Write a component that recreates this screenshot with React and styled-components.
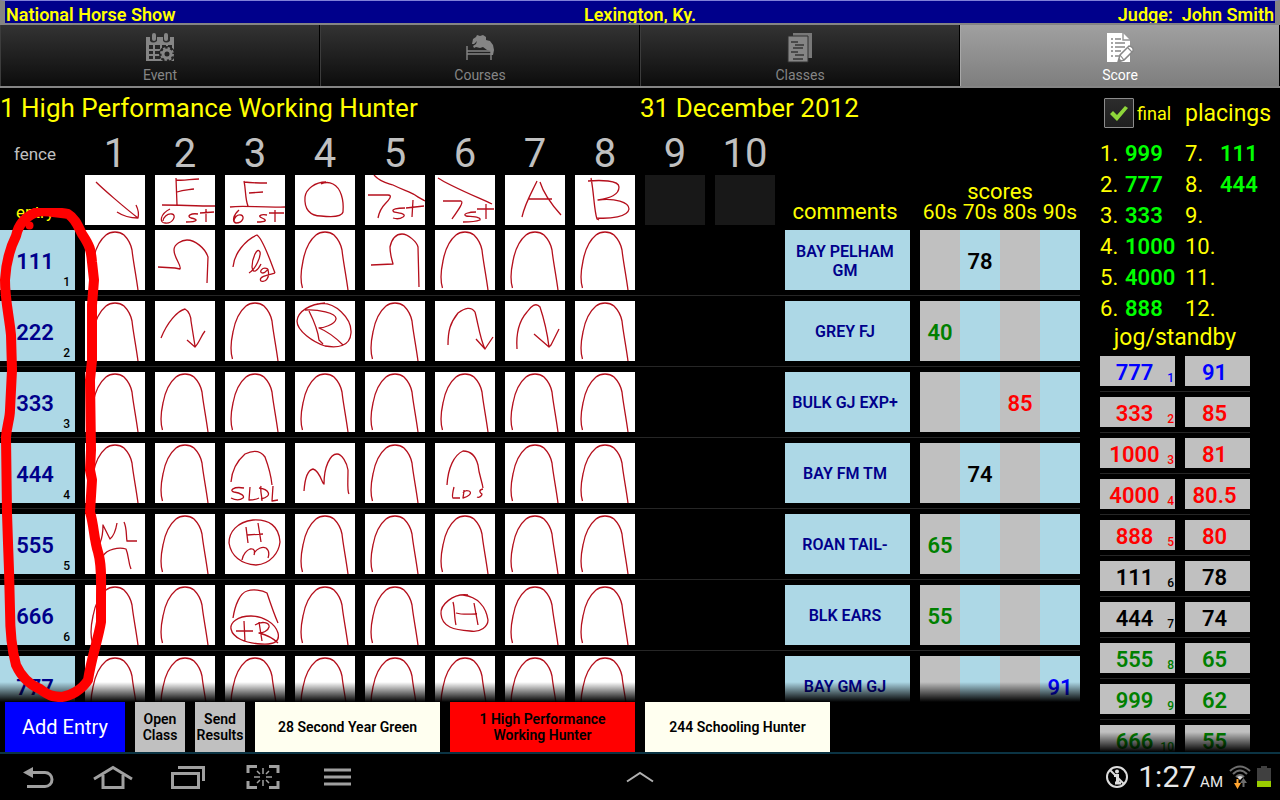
import React from "react";
import styled, { createGlobalStyle } from "styled-components";

const GlobalStyle = createGlobalStyle`
  * { box-sizing: border-box; }
  body {
    margin: 0;
    background: #000;
    font-family: Roboto, "Liberation Sans", sans-serif;
  }
  button {
    font-family: inherit;
    border: 0;
    padding: 0;
    cursor: pointer;
  }
  svg { display: block; }
`;

const SKY = "#add8e6";
const SILVER = "#c0c0c0";
const NAVY = "#00008b";
const YELLOW = "#ffff00";

const Page = styled.div`
  display: flex;
  flex-direction: column;
  height: 100vh;
  overflow: hidden;
`;

const ShowBar = styled.header`
  display: grid;
  grid-template-columns: 1fr auto 1fr;
  height: 25px;
  flex: none;
  padding: 0 1px;
  line-height: 28px;
  font-size: 18px;
  font-weight: 600;
  color: ${YELLOW};
  background: ${NAVY};
  border: solid #848484;
  border-width: 1px 5px 2px 5px;
  border-top-color: #8080d8;
  overflow: hidden;
  white-space: pre;
`;

const JudgeName = styled.span`
  text-align: right;
`;

const TabBar = styled.nav`
  display: flex;
  flex: none;
  height: 63px;
  border-bottom: 2px solid #858585;
`;

const Tab = styled.button`
  flex: 1;
  display: flex;
  flex-direction: column;
  align-items: center;
  gap: 3px;
  padding-top: 8px;
  font-size: 14px;
  line-height: 18px;
  color: ${(p) => (p.$active ? "#fff" : "#858585")};
  background: ${(p) =>
    p.$active
      ? "linear-gradient(#a0a0a0, #7e7e7e)"
      : "linear-gradient(#333, #1c1c1c 60%, #0c0c0c)"};
  border-left: 1px solid ${(p) => (p.$active ? "#a8a8a8" : "#3c3c3c")};
  border-right: 1px solid #000;
`;

const Body = styled.div`
  display: flex;
  flex: 1;
  min-height: 0;
`;

const Main = styled.main`
  position: relative;
  display: flex;
  flex-direction: column;
  flex: 1;
  min-width: 0;
`;

const ClassHeading = styled.div`
  display: grid;
  grid-template-columns: 640px 1fr;
  flex: none;
  font-size: 26px;
  line-height: 40px;
  color: ${YELLOW};
`;

const ClassTitle = styled.h1`
  margin: 0;
  font: inherit;
`;

const FadingList = styled.div`
  position: relative;
  flex: 1;
  min-height: 0;
  overflow: hidden;
  padding-top: ${(p) => p.$top || 0}px;
  padding-right: ${(p) => p.$inset}px;
  &::after {
    content: "";
    position: absolute;
    left: 0;
    right: 0;
    bottom: 0;
    height: 20px;
    background: linear-gradient(rgba(0, 0, 0, 0), #000);
  }
`;

const ScoreTable = styled.table`
  width: 100%;
  table-layout: fixed;
  border-spacing: 0;
`;

const Col = styled.col`
  width: ${(p) => p.$w}px;
`;

const NumberHead = styled.th`
  height: 42px;
  padding: 0 10px 0 0;
  font-size: 40px;
  line-height: 42px;
  font-weight: 400;
  color: ${SILVER};
`;

const FenceHead = styled(NumberHead)`
  padding-right: 15px;
  font-size: 17px;
`;

const SketchHead = styled.th`
  padding: 0 10px 0 0;
`;

const LabelHead = styled.th`
  height: 50px;
  padding: 0 ${(p) => p.$right}px 3px 0;
  vertical-align: bottom;
  font-size: ${(p) => (p.$small ? 17 : 22)}px;
  line-height: 20px;
  font-weight: 400;
  color: ${YELLOW};
`;

const BandLabels = styled.div`
  display: grid;
  grid-template-columns: repeat(4, 40px);
  font-size: 21px;
`;

const Cell = styled.td`
  padding: 5px ${(p) => (p.$flush ? 0 : 10)}px 5px 0;
  border-bottom: 1px solid #262626;
`;

const SketchBox = styled.div`
  height: ${(p) => p.$h}px;
  background: ${(p) => (p.$empty ? "#181818" : "#fff")};
`;

const Sketch = styled.svg`
  fill: none;
  stroke: #b50f1c;
  stroke-width: 1.3;
  stroke-linejoin: round;
`;

const EntryBox = styled.div`
  position: relative;
  height: 60px;
  padding: 2px 5px 0 0;
  text-align: center;
  font-size: 22px;
  line-height: 60px;
  font-weight: 600;
  color: ${NAVY};
  background: ${SKY};
`;

const Order = styled.span`
  position: absolute;
  right: ${(p) => p.$right}px;
  bottom: 1px;
  font-size: 12px;
  line-height: 14px;
  font-weight: 500;
  color: ${(p) => p.$color};
`;

const CommentBox = styled.div`
  display: flex;
  align-items: center;
  justify-content: center;
  height: 60px;
  padding: 1px 10px 0 5px;
  text-align: center;
  font-size: 16px;
  line-height: 19px;
  font-weight: 600;
  color: ${NAVY};
  background: ${SKY};
`;

const Band = styled.div`
  height: 60px;
  padding-top: 2px;
  text-align: center;
  font-size: 22px;
  line-height: 60px;
  font-weight: 600;
  color: ${(p) => p.$color};
  background: ${(p) => p.$bg};
`;

const ClassBar = styled.div`
  display: flex;
  flex: none;
  gap: 10px;
  height: 50px;
  padding-left: 5px;
`;

const AddEntry = styled.button`
  width: 120px;
  font-size: 20px;
  color: #fff;
  background: #0000ff;
`;

const ActionButton = styled.button`
  width: 50px;
  font-size: 14px;
  line-height: 16px;
  font-weight: 600;
  color: #000;
  background: ${SILVER};
`;

const ClassButton = styled(ActionButton)`
  width: 185px;
  padding: 0 20px 1px;
  background: ${(p) => (p.$active ? "#ff0000" : "#fffff0")};
`;

const Annotation = styled.svg`
  position: absolute;
  left: 0;
  top: 120px;
  pointer-events: none;
  fill: none;
  stroke: #ff0000;
  stroke-width: 10;
  stroke-linejoin: round;
  stroke-linecap: round;
`;

const Sidebar = styled.aside`
  display: flex;
  flex-direction: column;
  flex: none;
  width: 180px;
`;

const PlacingsHead = styled.div`
  display: flex;
  align-items: center;
  flex: none;
  height: 50px;
  padding: 0 0 0 4px;
  color: ${YELLOW};
`;

const FinalLabel = styled.label`
  position: relative;
  display: flex;
  align-items: center;
  gap: 3px;
  width: 81px;
  font-size: 18px;
`;

const FinalCheck = styled.input`
  appearance: none;
  width: 30px;
  height: 30px;
  margin: 0;
  background: linear-gradient(#2c2c2c, #1e1e1e);
  border: 1px solid #8c8c8c;
  border-radius: 1px;
`;

const CheckMark = styled.svg`
  position: absolute;
  left: 5px;
  top: 5px;
  pointer-events: none;
`;

const SideTitle = styled.h2`
  flex: none;
  margin: 0;
  font-size: 23px;
  line-height: 27px;
  font-weight: 400;
  color: ${YELLOW};
`;

const JogTitle = styled(SideTitle)`
  width: 150px;
  text-align: center;
`;

const PlacingsTable = styled.table`
  flex: none;
  width: 100%;
  table-layout: fixed;
  border-spacing: 0;
  font-size: 22px;
  line-height: 31px;
`;

const PlaceCell = styled.td`
  padding: 0;
  color: ${YELLOW};
`;

const WinnerCell = styled.td`
  padding: 0;
  font-weight: 600;
  color: #00ff00;
`;

const JogTable = styled.table`
  width: 150px;
  table-layout: fixed;
  border-spacing: 0;
`;

const JogBox = styled.div`
  position: relative;
  height: 30px;
  padding: 2px 6px 0 0;
  text-align: center;
  font-size: 22px;
  line-height: 30px;
  font-weight: 600;
  color: ${(p) => p.$color};
  background: ${SILVER};
`;

const SystemBar = styled.footer`
  display: grid;
  grid-template-columns: 1fr auto 1fr;
  align-items: center;
  flex: none;
  height: 48px;
  border-top: 2px solid #0b3444;
`;

const NavKeys = styled.div`
  display: flex;
`;

const NavKey = styled.button`
  display: flex;
  justify-content: center;
  width: 75px;
  background: none;
`;

const Status = styled.div`
  display: flex;
  align-items: center;
  justify-content: flex-end;
  gap: 6px;
  padding-right: 9px;
  color: #e8e8e8;
`;

const Clock = styled.div`
  display: flex;
  align-items: baseline;
  gap: 4px;
  padding-left: 3px;
  font-size: 30px;
  line-height: 40px;
`;

const Meridiem = styled.span`
  font-size: 15px;
  line-height: 18px;
`;

const ARCH =
  "M7.5 58C5 50 6 40 8 31C10 20 15 10 21 5C26 1 34 1 39 5C43 9 46 15 47 20C48 30 51 45 53 60";

const COURSE = [
  "M11 7C18 14 40 33 53 43M32 37C38 41 46 43 53 43C54 39 53 34 51 30",
  "M21 3L22 30M21 5C30 6 35 4 44 4M22 17C28 15 32 15 39 14M7 30C25 30 40 31 60 31M15 34C5 39 4 48 10 48C18 49 22 40 17 39C12 38 8 43 8 46M43 39C36 38 31 41 36 43C43 44 44 47 31 47M51 34L51 47M45 38L59 37",
  "M19 6C21 15 20 24 23 31M19 7C28 8 34 8 42 8M24 18L38 17M5 32C20 30 35 33 60 32M14 35C8 40 7 47 11 48C18 48 20 41 16 40C12 39 9 43 9 46M42 40C36 39 32 41 37 43C42 45 42 47 32 47M50 35L50 47M44 38L59 38",
  "M31 7C20 7 11 14 10 22C9 34 15 41 26 41C35 42 47 42 48 37C49 25 46 13 38 9C34 7 30 7 26 9",
  "M9 0C15 7 22 8 28 10C38 15 45 17 50 20C54 23 57 24 60 26M3 20L23 20C28 20 24 25 20 29C15 34 14 38 13 43M40 33C33 33 25 34 29 37C35 38 42 39 38 42C35 44 31 44 28 43M48 25L47 42M41 33L59 31",
  "M3 3C15 11 42 22 57 29M8 26L26 26C29 27 24 34 17 44M41 37C34 37 27 39 31 41C40 42 46 42 45 45C40 47 34 47 28 47M51 29L51 44M42 34L59 34",
  "M17 42C20 28 27 17 32 6M35 7C39 20 47 30 56 40M24 24L47 24",
  "M16 3C19 18 19 35 22 44L24 45M13 6C25 5 44 5 44 12C44 20 35 23 23 25C40 23 54 27 54 34C53 42 35 44 21 43",
];

const SKETCHES = {
  "111-2": "M3 37L20 38L25 39C27 36 19 28 19 20C19 14 27 10 32 10C40 10 50 18 53 27L52 53",
  "111-3":
    "M8 37C9 24 20 10 32 5C38 9 45 30 50 43M24 43C31 39 36 26 35 22C32 16 27 29 27 37C28 45 33 40 36 34M43 39C37 36 33 43 38 43C41 43 43 38 43 40C45 47 41 53 36 51C33 47 42 45 50 43",
  "111-5": "M6 35L28 34C26 26 25 24 25 17C27 8 32 4 37 4C43 4 52 12 53 17L54 57",
  "222-2": "M6 37C12 22 22 10 30 8C34 10 36 16 36 20L40 45M32 39L40 46C44 42 46 35 50 30",
  "222-4":
    "M22 3C40 -1 57 18 56 32C55 46 42 47 30 45C18 41 2 30 2 20C3 10 15 3 30 2M10 9C22 8 42 12 41 18C40 24 27 27 24 27C29 29 37 33 48 44M14 10C19 20 23 30 24 39L28 43",
  "222-6": "M13 44C13 30 15 22 23 12C30 7 36 5 40 11C43 22 45 38 50 48M41 38L50 48L58 36",
  "222-7": "M12 48C11 34 14 20 22 11C26 5 31 1 35 6C39 18 42 30 44 46M29 33L44 46L46 44C49 38 51 34 54 28",
  "444-3":
    "M6 39C7 26 12 18 20 11C28 7 35 7 40 14C43 22 46 32 47 42M19 45C8 43 4 48 9 49C16 50 20 53 18 55C14 58 10 57 6 55M25 44L24 57C28 57 32 56 34 55M36 43C35 48 37 53 37 58M34 45C43 46 49 53 36 56M48 43L47 58L53 57",
  "444-4": "M9 48C10 34 13 27 18 26C23 27 26 35 28 40L29 41C29 24 35 11 42 11C47 11 52 20 53 27C53 40 52 48 54 51",
  "444-6":
    "M12 42C13 25 19 12 28 8C37 8 41 14 43 22C44 32 47 38 48 45M19 44C18 48 17 54 18 55L25 55M29 47C29 50 28 54 28 55C33 54 38 50 34 48C31 47 29 48 28 50M48 46C43 47 45 50 47 51C47 53 44 55 42 54",
  "555-1": "M15 29C18 22 18 16 18 11L25 25C29 22 31 15 32 9M39 8C42 14 41 22 42 27L52 27M18 42C22 35 34 33 41 35C44 42 43 48 46 55",
  "555-3":
    "M28 6C12 8 4 18 4 29C6 42 16 50 31 51C46 50 54 38 55 28C54 12 44 5 28 6M21 13L23 29M33 9L36 28M22 21L38 20M17 46C18 40 22 36 25 35C30 34 30 38 29 41M29 39C32 35 37 32 41 34C45 37 44 41 43 44",
  "666-3":
    "M8 33C10 20 15 8 22 6C28 4 37 5 42 8C45 17 49 29 53 38M26 31C12 31 5 38 6 44C8 53 20 58 36 59C50 60 55 56 53 48C50 38 38 31 26 31M11 46L28 46M19 36L20 57M34 37L37 56M30 40C36 36 45 37 44 42C43 46 38 48 34 48C42 50 48 53 53 58",
  "666-6":
    "M33 10C18 8 5 20 6 29C7 42 19 45 35 46C46 48 53 41 53 35C51 22 43 12 28 10M18 17C20 24 19 32 21 40M39 18L43 40M21 28C28 30 34 29 42 29",
};

const ENTRIES = [
  { id: "111", comment: "BAY PELHAM GM", band: 1, score: "78" },
  { id: "222", comment: "GREY FJ", band: 0, score: "40" },
  { id: "333", comment: "BULK GJ EXP+", band: 2, score: "85" },
  { id: "444", comment: "BAY FM TM", band: 1, score: "74" },
  { id: "555", comment: "ROAN TAIL-", band: 0, score: "65" },
  { id: "666", comment: "BLK EARS", band: 0, score: "55" },
  { id: "777", comment: "BAY GM GJ", band: 3, score: "91" },
];

const BAND_COLORS = ["#008000", "#000", "#ff0000", "#0000ff"];
const FENCES = [1, 2, 3, 4, 5, 6, 7, 8, 9, 10];

const PLACINGS = [
  ["999", "111"],
  ["777", "444"],
  ["333", ""],
  ["1000", ""],
  ["4000", ""],
  ["888", ""],
];

const JOG = [
  ["777", "91", 3],
  ["333", "85", 2],
  ["1000", "81", 2],
  ["4000", "80.5", 2],
  ["888", "80", 2],
  ["111", "78", 1],
  ["444", "74", 1],
  ["555", "65", 0],
  ["999", "62", 0],
  ["666", "55", 0],
];

const EventIcon = () => (
  <svg width="28" height="30" viewBox="0 0 28 30">
    <path d="M0 4H28V28H0Z" fill="#858585" />
    <path
      d="M3 12H7V16H3ZM9 12H14V16H9ZM16 12H20V16H16ZM22 12H26V16H22ZM3 18H7V21H3ZM9 18H14V21H9ZM3 23H7V26H3ZM9 23H14V26H9Z"
      fill="#262626"
    />
    <path d="M4 3H11V8Q7 11 4 8ZM17 3H24V8Q20 11 17 8Z" fill="#2c2c2c" />
    <rect x="6" y="0" width="4" height="8" rx="2" fill="#858585" />
    <rect x="18" y="0" width="4" height="8" rx="2" fill="#858585" />
    <circle cx="21" cy="21" r="8" fill="#222" />
    <circle cx="21" cy="21" r="4" fill="none" stroke="#858585" strokeWidth="3" />
    <circle cx="21" cy="21" r="6" fill="none" stroke="#858585" strokeWidth="2" strokeDasharray="2.4 2.3" />
  </svg>
);

const CoursesIcon = () => (
  <svg width="28" height="30" viewBox="0 0 28 30" fill="#858585">
    <path d="M6 11L7 6L10 4L11 2L14 3L17 2L20 4L20 7L24 8L27 12L28 17L27 22L25 22L25 18L21 17L17 14L14 15L10 14L8 15L7 13L10 11L11 8L8 11Z" />
    <path d="M1 13v14M25 17v10M1 18h24M1 21h24" fill="none" stroke="#858585" strokeWidth="1.4" />
  </svg>
);

const ClassesIcon = () => (
  <svg width="28" height="30" viewBox="0 0 28 30">
    <path d="M7 0H26V25H7Z" fill="#787878" />
    <path d="M2 3H22V29H2Z" fill="#858585" stroke="#303030" strokeWidth="1" />
    <path d="M5 9h7M9 12h9M7 15h10M5 19h7M9 22h9M7 26h10" stroke="#363636" strokeWidth="1.4" />
  </svg>
);

const ScoreIcon = () => (
  <svg width="28" height="30" viewBox="0 0 28 30">
    <path d="M1 0h16l7 7v22H1z" fill="#fff" />
    <path d="M17 0v7h7" fill="none" stroke="#949494" strokeWidth="1.4" />
    <path d="M5 6h2M9 6h6M5 10h2M9 10h10M5 14h2M9 14h10M5 18h2M9 18h6M5 23h2M9 23h4" stroke="#888" strokeWidth="1.5" />
    <path d="M12 29L14 22L23 13Q28 14 27 18L18 27Z" fill="#fff" stroke="#888" strokeWidth="1.5" />
    <path d="M14 22L18 27M22 15L26 19" stroke="#888" strokeWidth="1.2" />
    <path d="M12 29L13 25L16 28Z" fill="#888" />
  </svg>
);

const TABS = [
  ["Event", EventIcon],
  ["Courses", CoursesIcon],
  ["Classes", ClassesIcon],
  ["Score", ScoreIcon],
];

const KEYS = {
  Back: (
    <svg width="34" height="26" viewBox="0 0 34 26" fill="none" stroke="#a0a0a0" strokeWidth="3">
      <path d="M9 8.500H24a7 7 0 0 1 0 14H6" />
      <path d="M2 8.500L12 3V14Z" fill="#a0a0a0" stroke="none" />
    </svg>
  ),
  Home: (
    <svg width="40" height="26" viewBox="0 0 40 26" fill="none" stroke="#a0a0a0" strokeWidth="3">
      <path d="M1 15L20 3.500L39 15M10 11V23.500H30V11" />
    </svg>
  ),
  "Recent apps": (
    <svg width="36" height="26" viewBox="0 0 36 26" fill="none" stroke="#a0a0a0" strokeWidth="3">
      <path d="M2.500 9.500H28.500V23.500H2.500ZM8 3.500H33.500V17" />
    </svg>
  ),
  Screenshot: (
    <svg width="34" height="26" viewBox="0 0 34 26" fill="none" stroke="#a0a0a0" strokeWidth="3">
      <path d="M2 9V2.500H11M23 2.500H32V9M2 17V23.500H11M23 23.500H32V17" />
      <path d="M17 4V10M17 16V22M8 13H14M20 13H26M11 7L14 10M23 7L20 10M11 19L14 16M23 19L20 16" strokeWidth="1.500" />
    </svg>
  ),
  Menu: (
    <svg width="27" height="26" viewBox="0 0 27 26" stroke="#a0a0a0" strokeWidth="3">
      <path d="M0 6H27M0 13H27M0 20H27" />
    </svg>
  ),
};

function FenceSketch({ path, height }) {
  return (
    <SketchBox $h={height}>
      <Sketch width="60" height={height} viewBox={`0 0 60 ${height}`}>
        <path d={path} />
      </Sketch>
    </SketchBox>
  );
}

function EntryRow({ entry, order }) {
  return (
    <tr>
      <Cell>
        <EntryBox>
          {entry.id}
          <Order $right={5} $color="#000">{order}</Order>
        </EntryBox>
      </Cell>
      {FENCES.map((n) => (
        <Cell key={n}>
          {n <= 8 && <FenceSketch path={SKETCHES[`${entry.id}-${n}`] || ARCH} height={60} />}
        </Cell>
      ))}
      <Cell>
        <CommentBox>{entry.comment}</CommentBox>
      </Cell>
      {BAND_COLORS.map((color, i) => (
        <Cell key={color} $flush>
          <Band $color={color} $bg={i % 2 ? SKY : SILVER}>
            {entry.band === i ? entry.score : ""}
          </Band>
        </Cell>
      ))}
    </tr>
  );
}

function ScoreSheet() {
  return (
    <ScoreTable>
      <colgroup>
        <Col $w={85} />
        {FENCES.map((n) => (
          <Col key={n} $w={70} />
        ))}
        <col />
        {BAND_COLORS.map((c) => (
          <Col key={c} $w={40} />
        ))}
      </colgroup>
      <thead>
        <tr>
          <FenceHead>fence</FenceHead>
          {FENCES.map((n) => (
            <NumberHead key={n}>{n}</NumberHead>
          ))}
          <td colSpan={5} />
        </tr>
        <tr>
          <LabelHead $small $right={15}>entry</LabelHead>
          {FENCES.map((n) => (
            <SketchHead key={n}>
              {n <= 8 ? <FenceSketch path={COURSE[n - 1]} height={50} /> : <SketchBox $h={50} $empty />}
            </SketchHead>
          ))}
          <LabelHead $right={15}>comments</LabelHead>
          <LabelHead colSpan={4} $right={0}>
            scores
            <BandLabels>
              <span>60s</span>
              <span>70s</span>
              <span>80s</span>
              <span>90s</span>
            </BandLabels>
          </LabelHead>
        </tr>
      </thead>
      <tbody>
        {ENTRIES.map((entry, i) => (
          <EntryRow key={entry.id} entry={entry} order={i + 1} />
        ))}
      </tbody>
    </ScoreTable>
  );
}

function PlacingsPanel() {
  return (
    <Sidebar>
      <PlacingsHead>
        <FinalLabel>
          <FinalCheck type="checkbox" defaultChecked />
          <CheckMark width="20" height="20" viewBox="0 0 20 20">
            <path d="M1 11L4 8L8 12L16 3L19 5L8 18Z" fill="#8ed63a" />
          </CheckMark>
          final
        </FinalLabel>
        <SideTitle>placings</SideTitle>
      </PlacingsHead>
      <PlacingsTable>
        <colgroup>
          <Col $w={25} />
          <Col $w={60} />
          <Col $w={35} />
          <col />
        </colgroup>
        <tbody>
          {PLACINGS.map(([left, right], i) => (
            <tr key={left}>
              <PlaceCell>{i + 1}.</PlaceCell>
              <WinnerCell>{left}</WinnerCell>
              <PlaceCell>{i + 7}.</PlaceCell>
              <WinnerCell>{right}</WinnerCell>
            </tr>
          ))}
        </tbody>
      </PlacingsTable>
      <JogTitle>jog/standby</JogTitle>
      <FadingList $inset={30}>
        <JogTable>
          <colgroup>
            <Col $w={85} />
            <Col $w={65} />
          </colgroup>
          <tbody>
            {JOG.map(([id, score, band], i) => (
              <tr key={id}>
                <Cell>
                  <JogBox $color={BAND_COLORS[band]}>
                    {id}
                    <Order $right={1} $color={BAND_COLORS[band]}>{i + 1}</Order>
                  </JogBox>
                </Cell>
                <Cell $flush>
                  <JogBox $color={BAND_COLORS[band]}>{score}</JogBox>
                </Cell>
              </tr>
            ))}
          </tbody>
        </JogTable>
      </FadingList>
    </Sidebar>
  );
}

function StatusIcons() {
  return (
    <Status>
      <svg width="24" height="24" viewBox="0 0 24 24" fill="none" stroke="#dcdcdc" strokeWidth="2">
        <circle cx="12" cy="12" r="10" />
        <circle cx="12" cy="6.500" r="2" fill="#dcdcdc" stroke="none" />
        <path d="M9 10.500H12.500V18M10 18H16" strokeWidth="3" />
        <path d="M5 5L19 19" />
      </svg>
      <Clock>
        1:27<Meridiem>AM</Meridiem>
      </Clock>
      <svg width="22" height="24" viewBox="0 0 22 24" fill="none" strokeWidth="2">
        <path d="M1 6Q11 -3 21 6M4 9Q11 2 18 9M7 12Q11 8 15 12" stroke="#6e6e6e" />
        <path d="M8 12Q11 10 14 12L11 15Z" fill="#ddd" />
        <path d="M5 18H12L8.500 24ZM7.500 14H9.500V19H7.500Z" fill="#ffa530" />
        <path d="M11 18L14.500 13L18 18ZM13.500 17H15.500V22H13.500Z" fill="#6e6e6e" />
      </svg>
      <svg width="14" height="22" viewBox="0 0 14 22">
        <path d="M4 0H10V2H14V15H0V2H4Z" fill="#404040" />
        <path d="M0 15H14V21H0Z" fill="#99cc00" />
      </svg>
    </Status>
  );
}

export default function App() {
  return (
    <Page>
      <GlobalStyle />
      <ShowBar>
        <span>National Horse Show</span>
        <span>Lexington, Ky.</span>
        <JudgeName>{"Judge:  John Smith"}</JudgeName>
      </ShowBar>
      <TabBar>
        {TABS.map(([label, Icon]) => (
          <Tab key={label} type="button" $active={label === "Score"}>
            <Icon />
            {label}
          </Tab>
        ))}
      </TabBar>
      <Body>
        <Main>
          <ClassHeading>
            <ClassTitle>1 High Performance Working Hunter</ClassTitle>
            <span>31 December 2012</span>
          </ClassHeading>
          <FadingList $top={5} $inset={20}>
            <ScoreSheet />
          </FadingList>
          <ClassBar>
            <AddEntry type="button">Add Entry</AddEntry>
            <ActionButton type="button">Open Class</ActionButton>
            <ActionButton type="button">Send Results</ActionButton>
            <ClassButton type="button">28 Second Year Green</ClassButton>
            <ClassButton type="button" $active>1 High Performance Working Hunter</ClassButton>
            <ClassButton type="button">244 Schooling Hunter</ClassButton>
          </ClassBar>
          <Annotation width="110" height="500" viewBox="0 208 110 500">
            <path d="M16 236C18 226 24 216 40 211C50 211 60 213 68 214C75 218 78 226 82 234C90 246 91 250 92 262L94 280L92 305L92 360L90 380L91 450L90 470L92 480L90 512C94 525 94 540 98 552C102 565 101 580 101 600L101 622C98 640 92 655 88 680C82 690 70 696 62 697C52 697 48 695 40 689C30 685 22 678 16 665C12 650 10 635 10 610L9 570L8 543L7 513L6 437C7 425 10 418 10 410L12 370L11 335C9 315 5 300 5 280C6 262 9 250 16 236" />
            <circle cx="29.500" cy="225.500" r="4" fill="#ff0000" stroke="none" />
          </Annotation>
        </Main>
        <PlacingsPanel />
      </Body>
      <SystemBar>
        <NavKeys>
          {Object.entries(KEYS).map(([name, icon]) => (
            <NavKey key={name} type="button" aria-label={name}>
              {icon}
            </NavKey>
          ))}
        </NavKeys>
        <NavKey type="button" aria-label="Show tray">
          <svg width="28" height="12" viewBox="0 0 28 12" fill="none" stroke="#b0b0b0" strokeWidth="2">
            <path d="M1 10.500L14 2L27 10.500" />
          </svg>
        </NavKey>
        <StatusIcons />
      </SystemBar>
    </Page>
  );
}
